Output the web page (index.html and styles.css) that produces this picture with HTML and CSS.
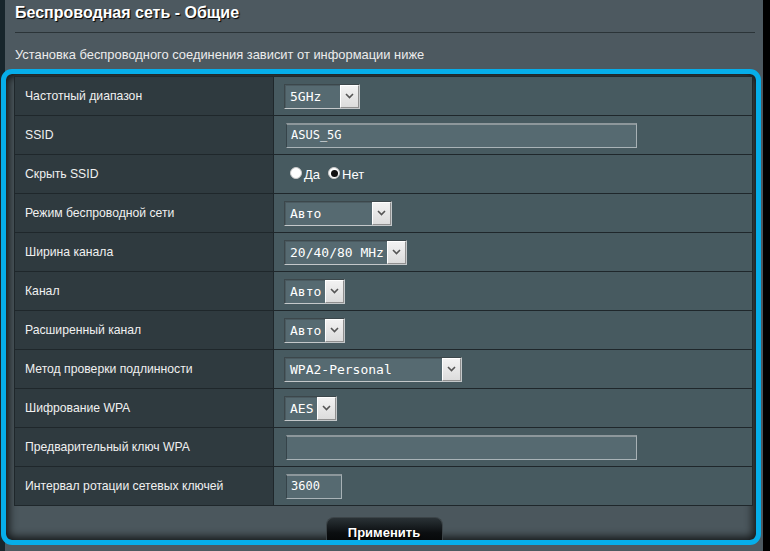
FILE: index.html
```html
<!DOCTYPE html>
<html lang="ru">
<head>
<meta charset="utf-8">
<title>Беспроводная сеть - Общие</title>
<link rel="stylesheet" href="styles.css">
</head>
<body>
<div class="page">
  <div class="head">
    <h1 class="title">Беспроводная сеть - Общие</h1>
  </div>
  <p class="subtitle">Установка беспроводного соединения зависит от информации ниже</p>
  <div class="box">
    <table class="form">
      <tr><th>Частотный диапазон</th><td><div class="sel w75"><span class="val">5GHz</span><span class="arr"><svg width="9" height="6" viewBox="0 0 9 6"><path d="M1 1l3.5 3.5L8 1" fill="none" stroke="#555" stroke-width="1.6"/></svg></span></div></td></tr>
      <tr><th>SSID</th><td><div class="inp wide">ASUS_5G</div></td></tr>
      <tr><th>Скрыть SSID</th><td><div class="radios"><span class="radio"></span><span class="rlabel">Да</span><span class="radio on"></span><span class="rlabel">Нет</span></div></td></tr>
      <tr><th>Режим беспроводной сети</th><td><div class="sel w108"><span class="val">Авто</span><span class="arr"><svg width="9" height="6" viewBox="0 0 9 6"><path d="M1 1l3.5 3.5L8 1" fill="none" stroke="#555" stroke-width="1.6"/></svg></span></div></td></tr>
      <tr><th>Ширина канала</th><td><div class="sel w123"><span class="val">20/40/80 MHz</span><span class="arr"><svg width="9" height="6" viewBox="0 0 9 6"><path d="M1 1l3.5 3.5L8 1" fill="none" stroke="#555" stroke-width="1.6"/></svg></span></div></td></tr>
      <tr><th>Канал</th><td><div class="sel w61"><span class="val">Авто</span><span class="arr"><svg width="9" height="6" viewBox="0 0 9 6"><path d="M1 1l3.5 3.5L8 1" fill="none" stroke="#555" stroke-width="1.6"/></svg></span></div></td></tr>
      <tr><th>Расширенный канал</th><td><div class="sel w61"><span class="val">Авто</span><span class="arr"><svg width="9" height="6" viewBox="0 0 9 6"><path d="M1 1l3.5 3.5L8 1" fill="none" stroke="#555" stroke-width="1.6"/></svg></span></div></td></tr>
      <tr><th>Метод проверки подлинности</th><td><div class="sel w178"><span class="val">WPA2-Personal</span><span class="arr"><svg width="9" height="6" viewBox="0 0 9 6"><path d="M1 1l3.5 3.5L8 1" fill="none" stroke="#555" stroke-width="1.6"/></svg></span></div></td></tr>
      <tr><th>Шифрование WPA</th><td><div class="sel w53"><span class="val">AES</span><span class="arr"><svg width="9" height="6" viewBox="0 0 9 6"><path d="M1 1l3.5 3.5L8 1" fill="none" stroke="#555" stroke-width="1.6"/></svg></span></div></td></tr>
      <tr><th>Предварительный ключ WPA</th><td><div class="inp wide"></div></td></tr>
      <tr><th>Интервал ротации сетевых ключей</th><td><div class="inp short">3600</div></td></tr>
    </table>
    <div class="actions">
      <button class="apply" type="button">Применить</button>
    </div>
  </div>
</div>
</body>
</html>
```

FILE: styles.css
```css
* { box-sizing: border-box; }
html, body { margin: 0; padding: 0; }
body {
  width: 770px;
  height: 551px;
  overflow: hidden;
  background: linear-gradient(to right, #18262c 0 5px, #000 5px);
  font-family: "Liberation Sans", Arial, sans-serif;
  color: #f2f2f2;
}
.page {
  margin-left: 5px;
  width: 758px;
  height: 551px;
  background: #4d5960;
  padding-top: 1px;
}
.head {
  margin: 0 8px 0 10px;
  height: 32px;
  border-bottom: 1px solid #2b3438;
}
.title {
  margin: 0;
  padding-top: 2px;
  font-size: 16px;
  line-height: 19px;
  font-weight: bold;
  color: #fff;
  text-shadow: 1px 1px 1px #000;
}
.subtitle {
  margin: 0;
  padding: 14px 0 0 10px;
  height: 36px;
  font-size: 12.9px;
  line-height: 15px;
  color: #ececec;
}
.box {
  margin-left: -4px;
  width: 760px;
  height: 476px;
  border: 5px solid #06aeea;
  border-radius: 11px;
  background: #4b575d;
  box-shadow: inset 0 0 9px 3px rgba(0,0,0,0.75);
  padding: 2px 4px 0 8px;
  overflow: hidden;
}
.form {
  width: 739px;
  border-collapse: collapse;
  border: 1px solid #1f272b;
}
.form th, .form td {
  height: 39px;
  border: 1px solid #1f272b;
  padding: 0;
  vertical-align: middle;
}
.form th {
  width: 259px;
  background: #2f3a3f;
  text-align: left;
  font-weight: normal;
  font-size: 12.2px;
  padding-left: 10px;
  color: #f0f0f0;
}
.form td {
  background: #475a60;
  padding-left: 10px;
}
.sel {
  display: flex;
  height: 25px;
  border: 1px solid;
  border-color: #3c474b #c4c8ca #c4c8ca #3c474b;
  background: #566a71;
  box-shadow: inset 1px 1px 0 #4a5a60;
}
.sel .val {
  flex: 1;
  padding-left: 5px;
  font-family: "DejaVu Sans Mono", monospace;
  font-size: 13px;
  line-height: 23px;
  color: #fff;
  white-space: nowrap;
}
.sel .arr {
  width: 19px;
  display: flex;
  align-items: center;
  justify-content: center;
  background: linear-gradient(#f2f2f2, #dcdcdc);
  border: 1px solid;
  border-color: #fff #8f8f8f #8f8f8f #fff;
}
.w75 { width: 76px; }
.w108 { width: 108px; }
.w123 { width: 123px; }
.w61 { width: 61px; }
.w178 { width: 178px; }
.w53 { width: 53px; }
.inp {
  margin-left: 2px;
  height: 25px;
  border: 1px solid;
  border-top: 2px solid #8d979b;
  border-color: #8d979b #a7b1b5 #a9b3b7 #36444a;
  background: #566a71;
  padding-left: 4px;
  font-family: "DejaVu Sans Mono", monospace;
  font-size: 12px;
  line-height: 21px;
  color: #fff;
}
.wide { width: 351px; }
.short { width: 56px; }
.radios {
  display: flex;
  align-items: center;
  padding-left: 6px;
  margin-top: -2px;
}
.radio {
  width: 12px;
  height: 12px;
  border-radius: 50%;
  background: #fff;
  border: 1px solid #c8c8c8;
  position: relative;
}
.radio.on::after {
  content: "";
  position: absolute;
  left: 1.5px;
  top: 1.5px;
  width: 7px;
  height: 7px;
  border-radius: 50%;
  background: #111;
}
.rlabel {
  font-size: 13px;
  margin: 2px 8px 0 2px;
  color: #fff;
}
.actions {
  display: flex;
  justify-content: center;
  padding-top: 11px;
  padding-left: 2px;
}
.apply {
  width: 117px;
  height: 34px;
  border: 1px solid #3c4448;
  border-bottom: none;
  border-radius: 8px 8px 0 0;
  background: linear-gradient(#2a3236, #0b0e10 45%, #000);
  color: #fff;
  font-family: "Liberation Sans", Arial, sans-serif;
  font-size: 13px;
  font-weight: bold;
  padding: 0 0 4px;
  margin-left: 0;
  text-shadow: 1px 1px 1px #000;
}
```
